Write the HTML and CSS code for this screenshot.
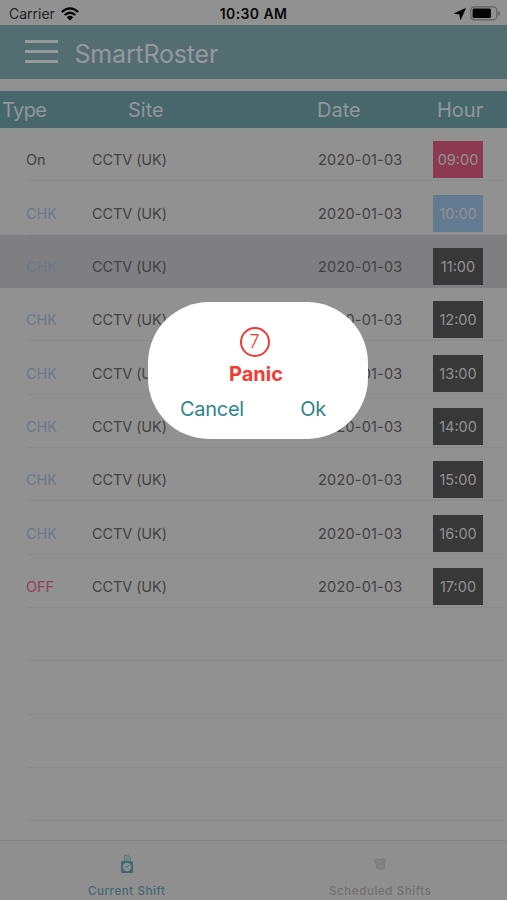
FILE: index.html
```html
<!DOCTYPE html>
<html lang="en">
<head>
<meta charset="utf-8">
<title>SmartRoster</title>
<link rel="stylesheet" href="styles.css">
</head>
<body>
<div class="app">
  <div class="status">
    <div class="carrier"><span>Carrier</span>
      <svg width="18" height="14" viewBox="0 0 18 14" fill="none" stroke="#050505" stroke-width="2.3"><path d="M.8 5Q9-2.2 17.2 5M3.7 8Q9 3.4 14.3 8"/><path d="M5.8 10.2Q9 7.4 12.2 10.2L9 13.6Z" fill="#050505" stroke="none"/></svg>
    </div>
    <div class="clock">10:30 AM</div>
    <div class="power">
      <svg width="12" height="12" viewBox="0 0 12 12"><path d="M11.7.3L.3 5.4 5.6 6.2 6.6 11.7Z" fill="#050505" stroke="#050505" stroke-width=".5"/></svg>
      <svg width="31" height="15" viewBox="0 0 31 15"><rect x=".8" y=".8" width="26" height="13" rx="3.6" fill="none" stroke="#626262" stroke-width="1.2"/><rect x="2.6" y="2.6" width="18.4" height="9.4" rx="1.6" fill="#050505"/><path d="M28.2 5v5q1.8-.7 1.8-2.5T28.2 5" fill="#626262"/></svg>
    </div>
  </div>
  <header class="nav"><div class="menu"><i></i><i></i><i></i></div><h1>SmartRoster</h1></header>
  <div class="row heads"><span class="type">Type</span><span>Site</span><span>Date</span><span>Hour</span></div>
  <main class="list">
    <div class="row"><span>On</span><span>CCTV (UK)</span><span class="date">2020-01-03</span><b class="pink">09:00</b></div>
    <div class="row chk"><span>CHK</span><span>CCTV (UK)</span><span class="date">2020-01-03</span><b class="blue">10:00</b></div>
    <div class="row chk selected"><span>CHK</span><span>CCTV (UK)</span><span class="date">2020-01-03</span><b>11:00</b></div>
    <div class="row chk"><span>CHK</span><span>CCTV (UK)</span><span class="date">2020-01-03</span><b>12:00</b></div>
    <div class="row chk"><span>CHK</span><span>CCTV (UK)</span><span class="date">2020-01-03</span><b>13:00</b></div>
    <div class="row chk"><span>CHK</span><span>CCTV (UK)</span><span class="date">2020-01-03</span><b>14:00</b></div>
    <div class="row chk"><span>CHK</span><span>CCTV (UK)</span><span class="date">2020-01-03</span><b>15:00</b></div>
    <div class="row chk"><span>CHK</span><span>CCTV (UK)</span><span class="date">2020-01-03</span><b>16:00</b></div>
    <div class="row off"><span>OFF</span><span>CCTV (UK)</span><span class="date">2020-01-03</span><b>17:00</b></div>
    <div class="row"></div><div class="row"></div><div class="row"></div><div class="row"></div>
  </main>
  <footer class="tabs">
    <div class="tab active">
      <svg width="14" height="20" viewBox="0 0 14 20"><path d="M4.5 7V1.5l3-.5 3 2.500V7" fill="#7c8d8e" stroke="#5b7679"/><path d="M6 4h3M6 6h3" stroke="#5b7679" stroke-width=".8"/><rect x="1" y="7" width="12" height="12" rx="1.5" fill="#41696d"/><circle cx="7" cy="13" r="4.200" fill="#859192"/><path d="M7 13l2-2M7 13H5" stroke="#41696d"/></svg>
      <span>Current Shift</span>
    </div>
    <div class="tab">
      <svg width="14" height="20" viewBox="0 0 14 20"><path d="M1 5l3-1 3 1 3-1 3 2-1 3v6l-4 1-5-1V10L1 8Z" fill="#7f7f7f"/><path d="M3 6l3 3 4-3M6 12h4" fill="none" stroke="#8b8b8b"/></svg>
      <span>Scheduled Shifts</span>
    </div>
  </footer>
  <div class="dialog">
    <div class="badge">7</div>
    <strong>Panic</strong>
    <div class="actions"><span>Cancel</span><span>Ok</span></div>
  </div>
</div>
</body>
</html>
```
FILE: styles.css
```css
* { box-sizing: border-box; }
body { margin: 0; font-family: Inter, "Liberation Sans", sans-serif; }
.app { position: relative; display: flex; flex-direction: column; width: 507px; height: 900px; overflow: hidden; background: #919191; color: #424242; }
.status { display: grid; grid-template-columns: 1fr 130px 1fr; align-items: center; height: 25px; padding: 2px 6px 0 6px; color: #090909; font-size: 14px; }
.carrier { display: flex; align-items: center; gap: 6px; padding-left: 3px; color: #242424; }
.clock { text-align: center; font-weight: 600; font-size: 14px; letter-spacing: .4px; white-space: nowrap; }
.power { display: flex; justify-content: flex-end; align-items: center; gap: 4px; }
.nav { display: flex; align-items: center; height: 54px; margin-bottom: 12px; padding-left: 25px; background: #536d70; color: #93999d; }
.menu { display: flex; flex-direction: column; gap: 7px; width: 33px; margin-right: 16.5px; padding-bottom: 1px; }
.menu i { height: 3px; background: #949b9c; }
.nav h1 { margin: 4px 0 0; font-size: 25px; font-weight: 400; line-height: 30px; letter-spacing: -.2px; }
.row { display: grid; grid-template-columns: 66px 226px 115px 50px; align-items: center; height: 53.35px; padding: 10px 0 0 26px; font-size: 14.5px; letter-spacing: -.1px; background: linear-gradient(#8a8a8a, #8a8a8a) 28px 100% / 100% 1px no-repeat; }
.heads { grid-template-columns: 126px 189px 120px 70px; height: 37px; padding: 1px 0 0 2px; background: #47676a; color: #90989c; font-size: 20px; letter-spacing: 0; }
.type { letter-spacing: -.6px; }
.date { letter-spacing: .2px; }
.list { flex: 1; }
.row b { display: grid; place-items: center; height: 37px; background: #383838; color: #929292; font-size: 14.5px; font-weight: 400; letter-spacing: 0; }
.row .pink { background: #8c3a53; }
.row .blue { background: #647a91; }
.chk > :first-child { color: #6c788b; }
.off > :first-child { color: #904057; }
.row.selected { background: #7f7f81; }
.tabs { display: grid; grid-template-columns: 1fr 1fr; height: 60px; border-top: 1px solid #838384; background: #8f8f8f; }
.tab { display: flex; flex-direction: column; align-items: center; gap: 10px; padding-top: 13px; color: #707070; font-size: 11.5px; font-weight: 500; line-height: 15px; letter-spacing: .6px; }
.tab.active { color: #43696c; }
.dialog { position: absolute; left: 148px; top: 302px; width: 220px; height: 137px; padding-top: 25px; border-radius: 61px; background: #fff; text-align: center; }
.badge { width: 30px; height: 30px; margin: 0 auto 0 92px; padding-right: 1px; border: 2px solid #ef3a32; border-radius: 50%; color: #ef3a32; font-size: 18px; font-weight: 300; line-height: 25px; }
.dialog strong { display: block; margin: 5px 4px 0 0; color: #f53a32; font-size: 20px; line-height: 24px; font-weight: 700; }
.actions { display: flex; justify-content: space-between; margin-top: 11px; padding: 0 42px 0 32px; color: #2f858e; font-size: 20px; line-height: 24px; letter-spacing: -.3px; }
```
